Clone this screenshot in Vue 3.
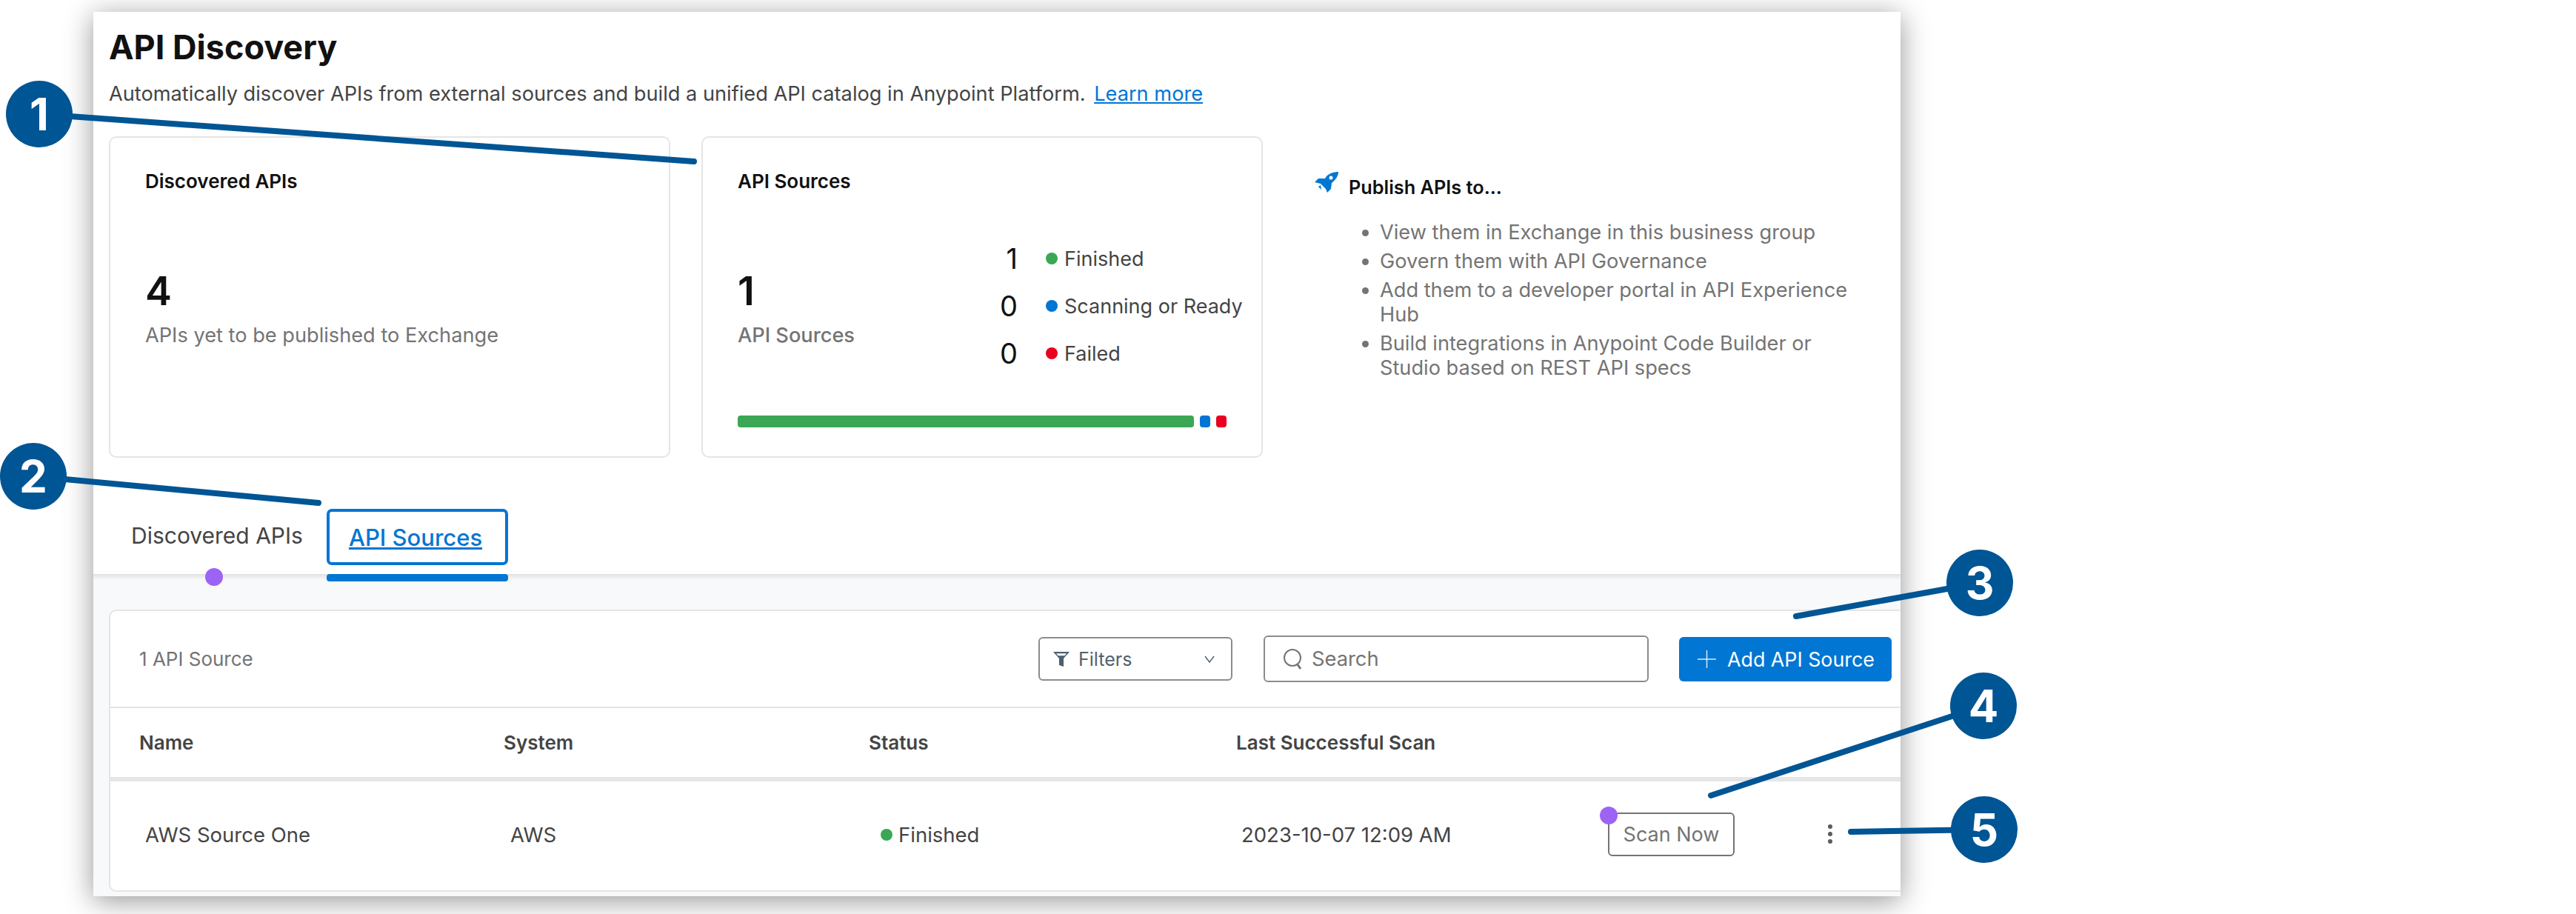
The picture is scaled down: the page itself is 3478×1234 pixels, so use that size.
<template>
  <div class="page">
    <div class="panel">
      <header class="intro">
        <h1>API Discovery</h1>
        <p class="lead">
          Automatically discover APIs from external sources and build a unified API catalog in Anypoint Platform.
          <a class="learn">Learn more</a>
        </p>
      </header>

      <section class="cards">
        <div class="card">
          <h3>Discovered APIs</h3>
          <div class="big big-one">4</div>
          <div class="muted">APIs yet to be published to Exchange</div>
        </div>

        <div class="card">
          <h3>API Sources</h3>
          <div class="source-mid">
            <div class="source-total">
              <div class="big">1</div>
              <div class="muted medium">API Sources</div>
            </div>
            <div class="stats">
              <template v-for="s in stats" :key="s.label">
                <span class="stat-num">{{ s.count }}</span>
                <span class="stat-label"><i class="dot" :class="s.tone"></i>{{ s.label }}</span>
              </template>
            </div>
          </div>
          <div class="bar">
            <span class="bar-green"></span>
            <span class="bar-blue"></span>
            <span class="bar-red"></span>
          </div>
        </div>

        <div class="publish">
          <div class="publish-head">
            <svg class="rocket" viewBox="10 7 32 28" width="32" height="28">
              <path fill="#0176d3" d="M42 7C36 7 30 9 26 13L24 16H15L10 21L18 23L25 30L27 35L32 30L33 22C38 18 42 13 42 7Z"/>
              <path fill="#0176d3" d="M15 27L18 25L19 31Z"/>
              <circle cx="32" cy="15" r="2.500" fill="#fff"/>
            </svg>
            <strong>Publish APIs to...</strong>
          </div>
          <ul>
            <li v-for="line in publishTo" :key="line">{{ line }}</li>
          </ul>
        </div>
      </section>

      <nav class="tabs">
        <a class="tab">Discovered APIs<i class="pip pip-tab"></i></a>
        <a class="tab tab-active">API Sources</a>
      </nav>

      <section class="lower">
        <div class="table-card">
          <div class="toolbar">
            <span class="count">1 API Source</span>
            <button class="filters">
              <svg viewBox="0 0 22 20" width="22" height="20">
                <path fill="#4b5f6e" d="M0 0h22l-8 9v11l-6-2V9z"/>
                <path fill="#fff" d="M4 2.200h14l-2.600 3H6.600z"/>
              </svg>
              <span>Filters</span>
              <svg class="chev" viewBox="0 0 14 10" width="14" height="10">
                <path fill="none" stroke="#4b5f6e" stroke-width="1.400" d="M1 1l6 8 6-8"/>
              </svg>
            </button>
            <div class="search">
              <svg viewBox="0 0 26 28" width="26" height="28">
                <circle cx="12" cy="12" r="11" fill="none" stroke="#747474" stroke-width="2"/>
                <path d="M18 20l5 7" stroke="#747474" stroke-width="3"/>
              </svg>
              <span>Search</span>
            </div>
            <button class="add">
              <svg viewBox="0 0 25 24" width="25" height="24">
                <path d="M12.500 0v24M0 12h25" stroke="#fff" stroke-width="1.500" opacity="0.850"/>
              </svg>
              <span>Add API Source</span>
            </button>
          </div>

          <div class="thead">
            <span>Name</span>
            <span>System</span>
            <span>Status</span>
            <span>Last Successful Scan</span>
          </div>

          <div class="trow">
            <span>AWS Source One</span>
            <span>AWS</span>
            <span class="status"><i class="dot green"></i>Finished</span>
            <span>2023-10-07 12:09 AM</span>
            <button class="scan">Scan Now<i class="pip pip-scan"></i></button>
            <span class="kebab"><i></i><i></i><i></i></span>
          </div>
        </div>
      </section>
    </div>

    <svg class="callouts" viewBox="0 0 3478 1234" width="3478" height="1234">
      <g v-for="c in callouts" :key="c.n">
        <line :x1="c.cx" :y1="c.cy" :x2="c.x" :y2="c.y" stroke="#005594" stroke-width="8" stroke-linecap="round"/>
        <circle :cx="c.cx" :cy="c.cy" r="45" fill="#005594"/>
        <text :x="c.cx" :y="c.cy + 22" text-anchor="middle" class="callout-num">{{ c.n }}</text>
      </g>
    </svg>
  </div>
</template>

<script setup>
const stats = [
  { count: 1, label: 'Finished', tone: 'green' },
  { count: 0, label: 'Scanning or Ready', tone: 'blue' },
  { count: 0, label: 'Failed', tone: 'red' }
]

const publishTo = [
  'View them in Exchange in this business group',
  'Govern them with API Governance',
  'Add them to a developer portal in API Experience Hub',
  'Build integrations in Anypoint Code Builder or Studio based on REST API specs'
]

// numbered annotations: circle centre, then where the leader line ends
const callouts = [
  { n: 1, cx: 53, cy: 154, x: 937, y: 218 },
  { n: 2, cx: 45, cy: 643, x: 430, y: 679 },
  { n: 3, cx: 2673, cy: 787, x: 2425, y: 832 },
  { n: 4, cx: 2678, cy: 953, x: 2310, y: 1074 },
  { n: 5, cx: 2679, cy: 1120, x: 2499, y: 1123 }
]
</script>

<style>
html,
body {
  background: #fff;
}
</style>

<style scoped>
.page {
  position: relative;
  width: 3478px;
  height: 1234px;
  overflow: hidden;
  font-family: Inter, 'Liberation Sans', sans-serif;
  color: #444;
}

.panel {
  width: 2440px;
  height: 1194px;
  margin: 16px 0 0 126px;
  background: #fff;
  box-shadow: 0 6px 36px rgba(0, 0, 0, 0.42);
  display: flex;
  flex-direction: column;
}

.intro {
  padding: 20px 21px 0;
}

h1 {
  margin: 0;
  font-size: 45px;
  line-height: 56px;
  font-weight: 700;
  color: #111;
}

.lead {
  margin: 15px 0 0;
  font-size: 27.2px;
  line-height: 40px;
  color: #444;
}

.learn {
  margin-left: 4px;
  color: #0176d3;
  text-decoration: underline;
}

.cards {
  display: flex;
  gap: 42px;
  height: 434px;
  margin: 37px 0 0 21px;
}

.card {
  width: 758px;
  box-sizing: border-box;
  padding: 44px 0 0 47px;
  border: 2px solid #e5e5e5;
  border-radius: 10px;
  display: flex;
  flex-direction: column;
}

h3 {
  margin: 0;
  font-size: 26px;
  line-height: 30px;
  font-weight: 600;
  color: #111;
}

.big {
  font-size: 54px;
  line-height: 64px;
  font-weight: 600;
  color: #111;
}

.big-one {
  margin-top: 101px;
}

.muted {
  margin-top: 10px;
  font-size: 27.2px;
  line-height: 36px;
  color: #747474;
}

.medium {
  font-weight: 500;
}

.source-mid {
  display: flex;
  margin-top: 65px;
}

.source-total {
  width: 352px;
  flex-shrink: 0;
  padding-top: 36px;
}

.stats {
  display: grid;
  grid-template-columns: 26px auto;
  column-gap: 38px;
  row-gap: 16px;
  align-items: center;
}

.stat-num {
  font-size: 38px;
  line-height: 48px;
  text-align: right;
  color: #111;
}

.stat-label {
  font-size: 27px;
  color: #444;
  display: flex;
  align-items: center;
  white-space: nowrap;
}

.dot {
  display: inline-block;
  width: 16px;
  height: 16px;
  border-radius: 50%;
  margin-right: 9px;
}

.green {
  background: #3ba755;
}

.blue {
  background: #0176d3;
}

.red {
  background: #ea001e;
}

.bar {
  display: flex;
  gap: 8px;
  height: 16px;
  margin-top: 60px;
}

.bar span {
  display: block;
  border-radius: 4px;
  width: 14px;
}

.bar .bar-green {
  width: 616px;
  background: #3ba755;
}

.bar-blue {
  background: #0176d3;
}

.bar-red {
  background: #ea001e;
}

.publish {
  margin-left: 28px;
  width: 728px;
  padding-top: 48px;
}

.publish-head {
  display: flex;
  align-items: flex-start;
  gap: 14px;
}

.rocket {
  flex-shrink: 0;
}

.publish-head strong {
  font-size: 25.3px;
  line-height: 36px;
  margin-top: 3px;
  font-weight: 600;
  color: #111;
}

ul {
  margin: 26px 0 0;
  padding: 0 0 0 88px;
  font-size: 27.2px;
  line-height: 33px;
  color: #747474;
}

li {
  margin-bottom: 6px;
}

.tabs {
  display: flex;
  height: 88px;
  margin-top: 69px;
  padding-left: 21px;
  gap: 0;
}

.tab {
  position: relative;
  box-sizing: border-box;
  height: 76px;
  padding: 0 30px;
  font-size: 30px;
  line-height: 72px;
  color: #444;
}

.tab-active {
  z-index: 2;
  width: 245px;
  padding: 0 26px;
  margin-left: 2px;
  font-size: 31px;
  line-height: 70px;
  font-weight: 500;
  color: #0176d3;
  text-decoration: underline;
  border: 4px solid #0176d3;
  border-radius: 7px;
}

.tab-active::after {
  content: '';
  position: absolute;
  left: -4px;
  right: -4px;
  top: 84px;
  height: 10px;
  border-radius: 4px;
  background: #0176d3;
}

.pip {
  position: absolute;
  width: 24px;
  height: 24px;
  border-radius: 50%;
  background: #9d63f5;
}

.pip-tab {
  left: 130px;
  top: 80px;
  z-index: 2;
}

.lower {
  flex: 1;
  background: linear-gradient(#e2e2e2, #f8f9fb 8px);
  padding: 48px 0 0 21px;
}

.table-card {
  box-sizing: border-box;
  height: 381px;
  background: #fff;
  border: 2px solid #e5e5e5;
  border-right: 0;
  border-radius: 10px 0 0 10px;
}

.toolbar {
  display: flex;
  align-items: center;
  box-sizing: border-box;
  height: 131px;
  padding: 0 12px 0 39px;
  border-bottom: 2px solid #e5e5e5;
}

.count {
  margin-right: auto;
  font-size: 26px;
  color: #747474;
}

button {
  font-family: inherit;
  box-sizing: border-box;
  background: #fff;
}

.filters {
  width: 262px;
  height: 59px;
  padding: 0 22px 0 18px;
  border: 2px solid #8c8c8c;
  border-radius: 6px;
  display: flex;
  align-items: center;
  gap: 12px;
  font-size: 25px;
  color: #51636f;
}

.chev {
  margin-left: auto;
}

.search {
  box-sizing: border-box;
  width: 520px;
  height: 63px;
  margin-left: 42px;
  padding-left: 25px;
  border: 2px solid #8c8c8c;
  border-radius: 6px;
  display: flex;
  align-items: center;
  gap: 12px;
  font-size: 27.3px;
  color: #747474;
}

.add {
  width: 287px;
  height: 60px;
  margin-left: 41px;
  padding: 0 0 0 25px;
  border: 0;
  border-radius: 6px;
  background: #0176d3;
  color: #fff;
  display: flex;
  align-items: center;
  gap: 15px;
  font-size: 26.8px;
}

.thead {
  display: grid;
  grid-template-columns: 492px 493px 496px 1fr;
  align-items: center;
  box-sizing: border-box;
  height: 99px;
  padding-left: 39px;
  border-bottom: 6px solid #e5e5e5;
  font-size: 26px;
  font-weight: 600;
  color: #444;
}

.trow {
  display: grid;
  grid-template-columns: 493px 500px 487px 495px 297px 1fr;
  align-items: center;
  box-sizing: border-box;
  height: 147px;
  padding: 0 0 4px 47px;
  font-size: 27.5px;
  color: #444;
}

.status {
  display: flex;
  align-items: center;
}

.status .dot {
  margin-right: 8px;
}

.scan {
  position: relative;
  width: 171px;
  height: 59px;
  padding: 0;
  border: 2px solid #747474;
  border-radius: 6px;
  font-size: 27px;
  color: #747474;
}

.pip-scan {
  left: -13px;
  top: -10px;
}

.kebab {
  display: flex;
  flex-direction: column;
  gap: 4px;
  width: 6px;
  margin-top: -2px;
}

.kebab i {
  width: 6px;
  height: 6px;
  border-radius: 50%;
  background: #5c5c5c;
}

.callouts {
  position: absolute;
  top: 0;
  left: 0;
}

.callout-num {
  font-family: Inter, 'Liberation Sans', sans-serif;
  font-size: 60px;
  font-weight: 700;
  fill: #fff;
}
</style>
